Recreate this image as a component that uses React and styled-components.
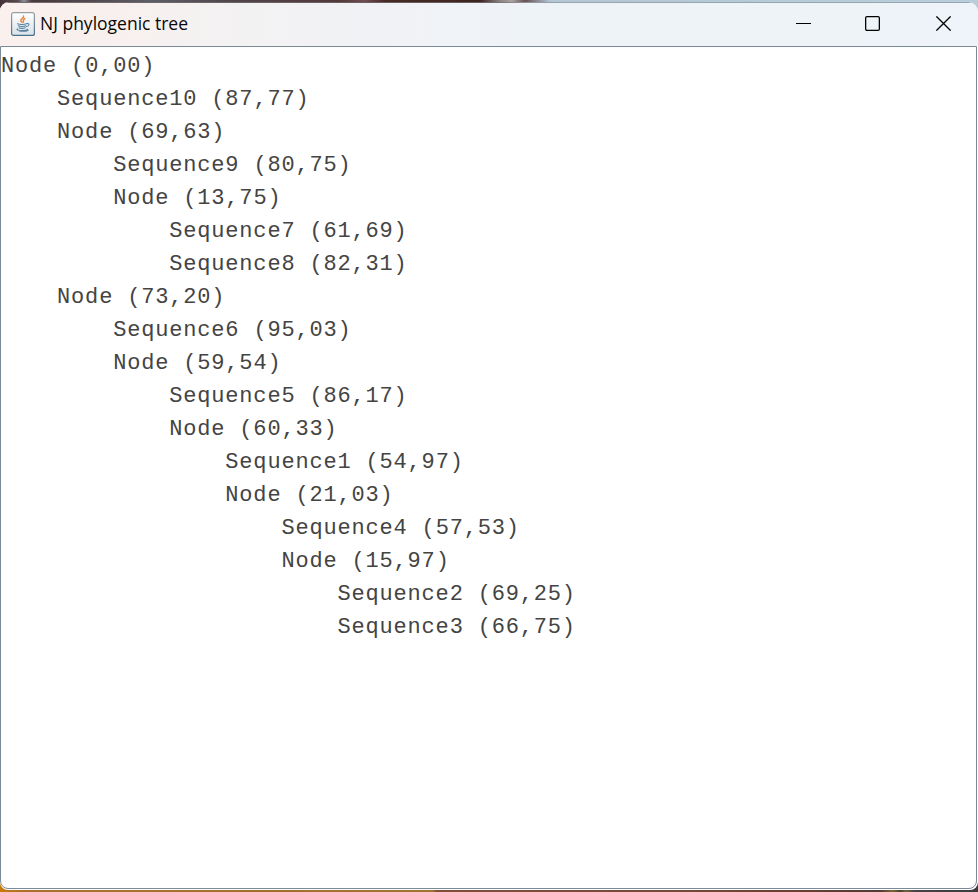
import React from 'react';
import styled, { createGlobalStyle } from 'styled-components';

const GlobalStyle = createGlobalStyle`
  html, body { margin: 0; padding: 0; overflow: hidden; }
  * { box-sizing: border-box; }
`;

const Desktop = styled.div`
  width: 978px;
  height: 892px;
  padding: 2px 0;
  background:
    linear-gradient(90deg, #443239 0, #594b50 18px, #8d8f9d 24px, #49383d 32px, #50464b 80px, #5b5e68 150px, #50464b 230px, #54383a 340px, #6f4c50 365px, #472a25 385px, #3e2420 480px, #8b8382 500px, #a9a4a2 512px, #665057 525px, #b4c6d3 550px, #b9cddb 978px) 0 0 / 978px 12px no-repeat,
    linear-gradient(90deg, #c77a08 0, #a96f2a 24px, #a2702c 290px, #9f7431 433px, #824e3c 436px, #734936 700px, #683f32 800px, #4c3d36 880px, #7b6735 893px, #463e35 900px, #75623b 906px, #454245 915px, #3c3c40 978px) 0 880px / 978px 12px no-repeat;
`;

const Window = styled.main`
  display: flex;
  flex-direction: column;
  width: 978px;
  height: 888px;
  overflow: hidden;
  border-radius: 9px 10px 8px 8px;
  background: #fff;
`;

const TitleBar = styled.header`
  display: flex;
  align-items: center;
  flex: 0 0 44px;
  padding: 0 0 2px 11px;
  border-top: 1px solid #929fa6;
  background: linear-gradient(90deg, #faf0ed 0, #f8f0ee 110px, #f3f2f3 240px, #f1f2f5 380px, #eff3f8 500px, #edf3f7 650px, #eef3f8 850px, #eff3fa 100%);
  border-image: linear-gradient(90deg, #74696b 0, #655b5e 480px, #8f8788 515px, #96a6b0 560px, #96a6b0 100%) 1;
`;

const Title = styled.h1`
  flex: 1;
  margin: 0 0 2px 5px;
  color: #080808;
  font: 400 17.5px/24px "Open Sans", "Noto Sans", sans-serif;
  white-space: nowrap;
`;

const Controls = styled.div`
  display: flex;
  height: 100%;
`;

const ControlButton = styled.button`
  display: flex;
  align-items: center;
  justify-content: center;
  width: ${({ $width }) => $width}px;
  padding: 0;
  border: 0;
  background: transparent;
`;

const TextArea = styled.section`
  flex: 1;
  width: 977px;
  margin-bottom: 1px;
  padding-top: 3px;
  border: 1px solid #7a8a99;
  border-radius: 0 0 8px 8px;
  background: #fff;
`;

const TreeLine = styled.div`
  height: 33px;
  padding-left: ${({ $depth }) => $depth * 56.08}px;
  color: #444;
  font: 400 22px/34px "Liberation Mono", monospace;
  letter-spacing: 0.82px;
  white-space: pre;
`;

const rows = [
  [0, 'Node (0,00)'],
  [1, 'Sequence10 (87,77)'],
  [1, 'Node (69,63)'],
  [2, 'Sequence9 (80,75)'],
  [2, 'Node (13,75)'],
  [3, 'Sequence7 (61,69)'],
  [3, 'Sequence8 (82,31)'],
  [1, 'Node (73,20)'],
  [2, 'Sequence6 (95,03)'],
  [2, 'Node (59,54)'],
  [3, 'Sequence5 (86,17)'],
  [3, 'Node (60,33)'],
  [4, 'Sequence1 (54,97)'],
  [4, 'Node (21,03)'],
  [5, 'Sequence4 (57,53)'],
  [5, 'Node (15,97)'],
  [6, 'Sequence2 (69,25)'],
  [6, 'Sequence3 (66,75)'],
];

function JavaIcon() {
  return (
    <svg width="24" height="24" viewBox="0 0 24 24" aria-hidden="true">
      <defs>
        <linearGradient id="tile" x1="0" y1="0" x2="0" y2="1">
          <stop offset="0" stopColor="#fff" />
          <stop offset="1" stopColor="#d9e2e7" />
        </linearGradient>
        <linearGradient id="edge" x1="0" y1="0" x2="0" y2="1">
          <stop offset="0" stopColor="#9a9fa3" />
          <stop offset="1" stopColor="#49718d" />
        </linearGradient>
      </defs>
      <rect x=".6" y=".6" width="22.8" height="22.8" rx="2" fill="url(#tile)" stroke="url(#edge)" strokeWidth="1.2" />
      <path d="M12.6 3.9c.6 2.4-3.3 3-2.8 4.8.2.7 1 1.2 1.3 1.7M13.9 6.5c-2.2.9-1.4 1.9-1.5 3.5" fill="none" stroke="#ee8131" strokeWidth="1.4" strokeLinecap="round" />
      <path d="M6.6 11.8c1.6.8 7 .8 8.8 0M7.3 13.8c1.6.8 5.8.8 7.4 0M8 15.7c1.6.7 4.6.7 6.2 0M15.8 11.7c3-.8 2.8 2.5-.4 2.9M6.6 17c-3.6 1.6 9.2 2.1 10 .3M8.4 19.1c3.2.4 7.3.1 8.8-.9" fill="none" stroke="#56809e" strokeWidth="1.05" strokeLinecap="round" />
    </svg>
  );
}

export default function App() {
  return (
    <>
      <GlobalStyle />
      <Desktop>
        <Window>
          <TitleBar>
            <JavaIcon />
            <Title>NJ phylogenic tree</Title>
            <Controls>
              <ControlButton $width={65} aria-label="Minimize">
                <svg width="15" height="15" viewBox="0 0 15 15"><path d="M0 7.5h15" stroke="#000" /></svg>
              </ControlButton>
              <ControlButton $width={73} aria-label="Maximize">
                <svg width="15" height="15" viewBox="0 0 15 15"><rect x=".65" y=".65" width="13.7" height="13.7" rx="1.3" fill="none" stroke="#000" strokeWidth="1.3" /></svg>
              </ControlButton>
              <ControlButton $width={69} aria-label="Close">
                <svg width="15" height="15" viewBox="0 0 15 15"><path d="M.4.4l14.2 14.2M14.6.4L.4 14.6" stroke="#000" strokeWidth="1.3" /></svg>
              </ControlButton>
            </Controls>
          </TitleBar>
          <TextArea>
            {rows.map(([depth, label]) => (
              <TreeLine key={label} $depth={depth}>{label}</TreeLine>
            ))}
          </TextArea>
        </Window>
      </Desktop>
    </>
  );
}
